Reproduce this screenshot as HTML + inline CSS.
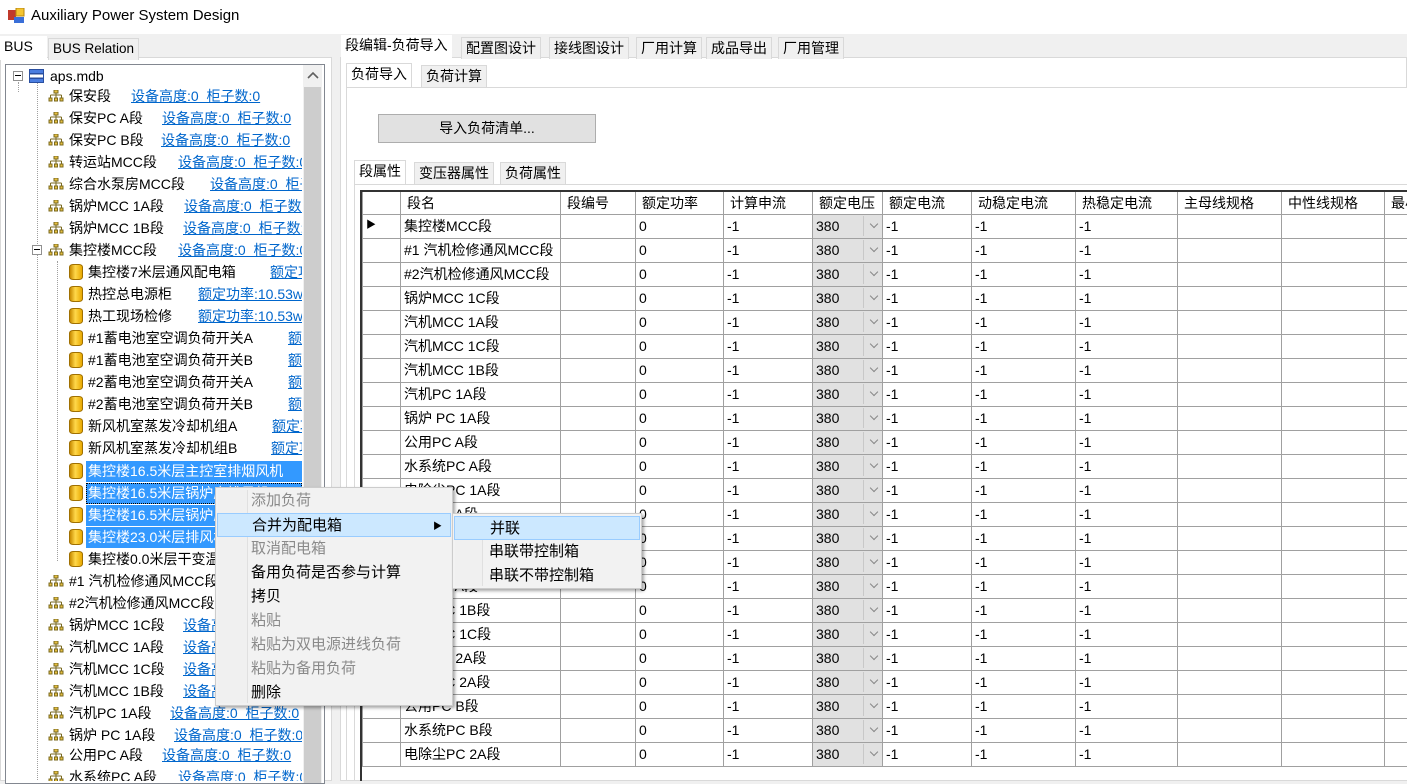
<!DOCTYPE html>
<html><head><meta charset="utf-8">
<style>
*{margin:0;padding:0;box-sizing:border-box}
body{width:1407px;height:781px;overflow:hidden;background:#f0f0f0;font-family:"Liberation Sans","Noto Sans CJK SC",sans-serif;font-size:14px;color:#000;position:relative}
.abs{position:absolute}
.title{left:0;top:0;width:1407px;height:34px;background:#fff}
.tab{position:absolute;height:22px;line-height:20px;padding:0 4px;border:1px solid #d9d9d9;border-bottom:none;background:#f0f0f0;white-space:nowrap}
.tab.sel{background:#fff;height:24px;z-index:2;border-color:#d9d9d9}
.r{position:absolute;height:20px;line-height:20px;white-space:nowrap;left:0;width:300px}
.r span,.r a,.r i,.r b{position:absolute;top:0}
.r a{color:#0066cc;text-decoration:underline}
.bi{width:16px;height:12px;top:4px!important}
.cy{width:14px;height:16px;top:2px!important;border-radius:4px/3px;background:linear-gradient(90deg,#c88a00,#ffd84a 45%,#e8a800);border:1px solid #a07000}
.hl{position:absolute;height:21px;background:#3399ff;}
.dot{position:absolute;border-left:1px dotted #a0a0a0}
.doth{position:absolute;border-top:1px dotted #a0a0a0;height:0}
table{border-collapse:collapse;font-size:14px}
td{border:1px solid #a0a0a0;height:24px;padding:0 3px;white-space:nowrap;overflow:hidden;line-height:22px}
th{border:1px solid #a0a0a0;height:23px;font-weight:normal;text-align:left;padding:0 6px;white-space:nowrap;overflow:hidden;border-top:2px solid #333}
.cb{background:#e1e1e1;position:relative;padding:0 3px}
.cb:after{content:"";position:absolute;right:0;top:1px;width:18px;height:20px;border-left:1px solid #c8c8c8;background:#e1e1e1}
.cb s{position:absolute;right:5px;top:6px;width:6px;height:6px;border-right:1px solid #888;border-bottom:1px solid #888;transform:rotate(45deg);z-index:2;text-decoration:none}
.menu{position:absolute;background:#f2f2f2;border:1px solid #ccc;box-shadow:2px 2px 3px rgba(0,0,0,.35)}
.mi{position:absolute;left:0;right:0;height:24px;line-height:24px;font-size:15px;white-space:nowrap}
.dis{color:#8a8a8a}
.mh{background:#cce8ff;border:1px solid #99ccff}
</style></head><body>
<div class="abs title"></div>
<svg class="abs" style="left:8px;top:8px" width="17" height="16"><rect x="0" y="2" width="8" height="10" fill="#c0392b"/><rect x="8" y="0" width="8" height="8" fill="#f4c430" stroke="#b8860b"/><rect x="6" y="9" width="10" height="6" fill="#3a6fd8"/></svg>
<div class="abs" style="left:31px;top:7px;font-size:15px">Auxiliary Power System Design</div>

<div class="abs" style="left:0;top:57px;width:332px;height:724px;background:#fff;border:1px solid #d9d9d9"></div>
<div class="tab sel" style="left:0;top:36px;width:47px;border:none">BUS</div>
<div class="tab" style="left:48px;top:38px;font-size:13.5px">BUS Relation</div>
<div class="abs" style="left:5px;top:64px;width:320px;height:720px;border:1px solid #828790;background:#fff;overflow:hidden">
<div class="abs" style="left:297px;top:0;width:19px;height:720px;background:#f0f0f0"></div>
<div class="abs" style="left:298px;top:22px;width:17px;height:700px;background:#cdcdcd"></div>
<svg class="abs" style="left:301px;top:6px" width="12" height="8"><path d="M1 7 L6 2 L11 7" stroke="#606060" stroke-width="1.6" fill="none"/></svg>
</div>

<div class="abs" style="left:6px;top:65px;width:296px;height:716px;overflow:hidden">
<div class="dot" style="left:12px;top:17px;height:10px"></div>
<div class="dot" style="left:31px;top:17px;height:700px"></div>
<div class="dot" style="left:51px;top:196px;height:300px"></div>
<div class="abs" style="left:7px;top:6px;width:10px;height:10px;border:1px solid #909090;background:#fff"><div class="abs" style="left:1px;top:3px;width:6px;height:1px;background:#000"></div></div>
<svg class="abs" style="left:23px;top:4px" width="15" height="14"><rect x="0.5" y="0.5" width="14" height="4" fill="#4a7de0" stroke="#2a4fa0"/><rect x="0.5" y="5" width="14" height="4" fill="#fff" stroke="#2a4fa0"/><rect x="0.5" y="9.5" width="14" height="4" fill="#4a7de0" stroke="#2a4fa0"/></svg>
<div class="r" style="top:1px"><span style="left:44px">aps.mdb</span></div>

<div class="abs" style="left:26px;top:180px;width:10px;height:10px;border:1px solid #909090;background:#fff;z-index:2"><div class="abs" style="left:1px;top:3px;width:6px;height:1px;background:#000"></div></div>

<div class="hl" style="left:80px;top:396px;width:216px"></div>
<div class="hl" style="left:80px;top:418px;width:216px;outline:1px dotted #000;outline-offset:-1px"></div>
<div class="hl" style="left:80px;top:440px;width:216px"></div>
<div class="hl" style="left:80px;top:462px;width:216px"></div>
</div>

<div class="abs" style="left:6px;top:65px;width:296px;height:716px;overflow:hidden">
<div class="r" style="top:21px"><svg class="bi" style="left:42px;position:absolute"><path d="M6 0h4v3h-4z M1 8h3v3h-3z M6.5 8h3v3h-3z M12 8h3v3h-3z M8 3v2 M2.5 5h11 M2.5 5v3 M8 5v3 M13.5 5v3" fill="#e8c040" stroke="#7a6a20" stroke-width="1"/></svg><span style="left:63px">保安段</span><a style="left:125px">设备高度:0&nbsp; 柜子数:0</a></div>
<div class="r" style="top:43px"><svg class="bi" style="left:42px;position:absolute"><path d="M6 0h4v3h-4z M1 8h3v3h-3z M6.5 8h3v3h-3z M12 8h3v3h-3z M8 3v2 M2.5 5h11 M2.5 5v3 M8 5v3 M13.5 5v3" fill="#e8c040" stroke="#7a6a20"/></svg><span style="left:63px">保安PC A段</span><a style="left:156px">设备高度:0&nbsp; 柜子数:0</a></div>
<div class="r" style="top:65px"><svg class="bi" style="left:42px;position:absolute"><path d="M6 0h4v3h-4z M1 8h3v3h-3z M6.5 8h3v3h-3z M12 8h3v3h-3z M8 3v2 M2.5 5h11 M2.5 5v3 M8 5v3 M13.5 5v3" fill="#e8c040" stroke="#7a6a20"/></svg><span style="left:63px">保安PC B段</span><a style="left:155px">设备高度:0&nbsp; 柜子数:0</a></div>
<div class="r" style="top:87px"><svg class="bi" style="left:42px;position:absolute"><path d="M6 0h4v3h-4z M1 8h3v3h-3z M6.5 8h3v3h-3z M12 8h3v3h-3z M8 3v2 M2.5 5h11 M2.5 5v3 M8 5v3 M13.5 5v3" fill="#e8c040" stroke="#7a6a20"/></svg><span style="left:63px">转运站MCC段</span><a style="left:172px">设备高度:0&nbsp; 柜子数:0</a></div>
<div class="r" style="top:109px"><svg class="bi" style="left:42px;position:absolute"><path d="M6 0h4v3h-4z M1 8h3v3h-3z M6.5 8h3v3h-3z M12 8h3v3h-3z M8 3v2 M2.5 5h11 M2.5 5v3 M8 5v3 M13.5 5v3" fill="#e8c040" stroke="#7a6a20"/></svg><span style="left:63px">综合水泵房MCC段</span><a style="left:204px">设备高度:0&nbsp; 柜子数:0</a></div>
<div class="r" style="top:131px"><svg class="bi" style="left:42px;position:absolute"><path d="M6 0h4v3h-4z M1 8h3v3h-3z M6.5 8h3v3h-3z M12 8h3v3h-3z M8 3v2 M2.5 5h11 M2.5 5v3 M8 5v3 M13.5 5v3" fill="#e8c040" stroke="#7a6a20"/></svg><span style="left:63px">锅炉MCC 1A段</span><a style="left:178px">设备高度:0&nbsp; 柜子数:0</a></div>
<div class="r" style="top:153px"><svg class="bi" style="left:42px;position:absolute"><path d="M6 0h4v3h-4z M1 8h3v3h-3z M6.5 8h3v3h-3z M12 8h3v3h-3z M8 3v2 M2.5 5h11 M2.5 5v3 M8 5v3 M13.5 5v3" fill="#e8c040" stroke="#7a6a20"/></svg><span style="left:63px">锅炉MCC 1B段</span><a style="left:177px">设备高度:0&nbsp; 柜子数:0</a></div>
<div class="r" style="top:175px"><svg class="bi" style="left:42px;position:absolute"><path d="M6 0h4v3h-4z M1 8h3v3h-3z M6.5 8h3v3h-3z M12 8h3v3h-3z M8 3v2 M2.5 5h11 M2.5 5v3 M8 5v3 M13.5 5v3" fill="#e8c040" stroke="#7a6a20"/></svg><span style="left:63px">集控楼MCC段</span><a style="left:172px">设备高度:0&nbsp; 柜子数:0</a></div>
<div class="r" style="top:197px"><i class="cy" style="left:63px"></i><span style="left:82px">集控楼7米层通风配电箱</span><a style="left:264px">额定功率:10.53w</a></div>
<div class="r" style="top:219px"><i class="cy" style="left:63px"></i><span style="left:82px">热控总电源柜</span><a style="left:192px">额定功率:10.53w</a></div>
<div class="r" style="top:241px"><i class="cy" style="left:63px"></i><span style="left:82px">热工现场检修</span><a style="left:192px">额定功率:10.53w</a></div>
<div class="r" style="top:263px"><i class="cy" style="left:63px"></i><span style="left:82px">#1蓄电池室空调负荷开关A</span><a style="left:282px">额定功率</a></div>
<div class="r" style="top:285px"><i class="cy" style="left:63px"></i><span style="left:82px">#1蓄电池室空调负荷开关B</span><a style="left:282px">额定功率</a></div>
<div class="r" style="top:307px"><i class="cy" style="left:63px"></i><span style="left:82px">#2蓄电池室空调负荷开关A</span><a style="left:282px">额定功率</a></div>
<div class="r" style="top:329px"><i class="cy" style="left:63px"></i><span style="left:82px">#2蓄电池室空调负荷开关B</span><a style="left:282px">额定功率</a></div>
<div class="r" style="top:351px"><i class="cy" style="left:63px"></i><span style="left:82px">新风机室蒸发冷却机组A</span><a style="left:266px">额定功率</a></div>
<div class="r" style="top:373px"><i class="cy" style="left:63px"></i><span style="left:82px">新风机室蒸发冷却机组B</span><a style="left:265px">额定功率</a></div>
<div class="r" style="top:396px;color:#fff"><i class="cy" style="left:63px"></i><span style="left:82px">集控楼16.5米层主控室排烟风机</span></div>
<div class="r" style="top:418px;color:#fff"><i class="cy" style="left:63px"></i><span style="left:82px">集控楼16.5米层锅炉房排风机</span></div>
<div class="r" style="top:440px;color:#fff"><i class="cy" style="left:63px"></i><span style="left:82px">集控楼16.5米层锅炉房排风机</span></div>
<div class="r" style="top:462px;color:#fff"><i class="cy" style="left:63px"></i><span style="left:82px">集控楼23.0米层排风机</span></div>
<div class="r" style="top:484px"><i class="cy" style="left:63px"></i><span style="left:82px">集控楼0.0米层干变温控</span></div>
<div class="r" style="top:506px"><svg class="bi" style="left:42px;position:absolute"><path d="M6 0h4v3h-4z M1 8h3v3h-3z M6.5 8h3v3h-3z M12 8h3v3h-3z M8 3v2 M2.5 5h11 M2.5 5v3 M8 5v3 M13.5 5v3" fill="#e8c040" stroke="#7a6a20"/></svg><span style="left:63px">#1 汽机检修通风MCC段</span></div>
<div class="r" style="top:528px"><svg class="bi" style="left:42px;position:absolute"><path d="M6 0h4v3h-4z M1 8h3v3h-3z M6.5 8h3v3h-3z M12 8h3v3h-3z M8 3v2 M2.5 5h11 M2.5 5v3 M8 5v3 M13.5 5v3" fill="#e8c040" stroke="#7a6a20"/></svg><span style="left:63px">#2汽机检修通风MCC段</span></div>
<div class="r" style="top:550px"><svg class="bi" style="left:42px;position:absolute"><path d="M6 0h4v3h-4z M1 8h3v3h-3z M6.5 8h3v3h-3z M12 8h3v3h-3z M8 3v2 M2.5 5h11 M2.5 5v3 M8 5v3 M13.5 5v3" fill="#e8c040" stroke="#7a6a20"/></svg><span style="left:63px">锅炉MCC 1C段</span><a style="left:177px">设备高度:0&nbsp; 柜子数:0</a></div>
<div class="r" style="top:572px"><svg class="bi" style="left:42px;position:absolute"><path d="M6 0h4v3h-4z M1 8h3v3h-3z M6.5 8h3v3h-3z M12 8h3v3h-3z M8 3v2 M2.5 5h11 M2.5 5v3 M8 5v3 M13.5 5v3" fill="#e8c040" stroke="#7a6a20"/></svg><span style="left:63px">汽机MCC 1A段</span><a style="left:177px">设备高度:0&nbsp; 柜子数:0</a></div>
<div class="r" style="top:594px"><svg class="bi" style="left:42px;position:absolute"><path d="M6 0h4v3h-4z M1 8h3v3h-3z M6.5 8h3v3h-3z M12 8h3v3h-3z M8 3v2 M2.5 5h11 M2.5 5v3 M8 5v3 M13.5 5v3" fill="#e8c040" stroke="#7a6a20"/></svg><span style="left:63px">汽机MCC 1C段</span><a style="left:177px">设备高度:0&nbsp; 柜子数:0</a></div>
<div class="r" style="top:616px"><svg class="bi" style="left:42px;position:absolute"><path d="M6 0h4v3h-4z M1 8h3v3h-3z M6.5 8h3v3h-3z M12 8h3v3h-3z M8 3v2 M2.5 5h11 M2.5 5v3 M8 5v3 M13.5 5v3" fill="#e8c040" stroke="#7a6a20"/></svg><span style="left:63px">汽机MCC 1B段</span><a style="left:177px">设备高度:0&nbsp; 柜子数:0</a></div>
<div class="r" style="top:638px"><svg class="bi" style="left:42px;position:absolute"><path d="M6 0h4v3h-4z M1 8h3v3h-3z M6.5 8h3v3h-3z M12 8h3v3h-3z M8 3v2 M2.5 5h11 M2.5 5v3 M8 5v3 M13.5 5v3" fill="#e8c040" stroke="#7a6a20"/></svg><span style="left:63px">汽机PC 1A段</span><a style="left:164px">设备高度:0&nbsp; 柜子数:0</a></div>
<div class="r" style="top:660px"><svg class="bi" style="left:42px;position:absolute"><path d="M6 0h4v3h-4z M1 8h3v3h-3z M6.5 8h3v3h-3z M12 8h3v3h-3z M8 3v2 M2.5 5h11 M2.5 5v3 M8 5v3 M13.5 5v3" fill="#e8c040" stroke="#7a6a20"/></svg><span style="left:63px">锅炉 PC 1A段</span><a style="left:168px">设备高度:0&nbsp; 柜子数:0</a></div>
<div class="r" style="top:680px"><svg class="bi" style="left:42px;position:absolute"><path d="M6 0h4v3h-4z M1 8h3v3h-3z M6.5 8h3v3h-3z M12 8h3v3h-3z M8 3v2 M2.5 5h11 M2.5 5v3 M8 5v3 M13.5 5v3" fill="#e8c040" stroke="#7a6a20"/></svg><span style="left:63px">公用PC A段</span><a style="left:156px">设备高度:0&nbsp; 柜子数:0</a></div>
<div class="r" style="top:702px"><svg class="bi" style="left:42px;position:absolute"><path d="M6 0h4v3h-4z M1 8h3v3h-3z M6.5 8h3v3h-3z M12 8h3v3h-3z M8 3v2 M2.5 5h11 M2.5 5v3 M8 5v3 M13.5 5v3" fill="#e8c040" stroke="#7a6a20"/></svg><span style="left:63px">水系统PC A段</span><a style="left:172px">设备高度:0&nbsp; 柜子数:0</a></div>
</div>

<div class="abs" style="left:340px;top:57px;width:1067px;height:724px;background:#fff;border:1px solid #d9d9d9"></div>
<div class="tab sel" style="left:341px;top:35px;border:none">段编辑-负荷导入</div>
<div class="tab" style="left:461px;top:37px">配置图设计</div>
<div class="tab" style="left:549px;top:37px">接线图设计</div>
<div class="tab" style="left:636px;top:37px">厂用计算</div>
<div class="tab" style="left:706px;top:37px">成品导出</div>
<div class="tab" style="left:778px;top:37px">厂用管理</div>
<div class="abs" style="left:346px;top:87px;width:1061px;height:694px;border:1px solid #d9d9d9;border-right:none;background:#fff"></div>
<div class="tab sel" style="left:346px;top:63px;border-bottom:none">负荷导入</div>
<div class="tab" style="left:421px;top:65px">负荷计算</div>
<div class="abs" style="left:378px;top:114px;width:218px;height:29px;background:#e1e1e1;border:1px solid #adadad;text-align:center;line-height:26px">导入负荷清单...</div>
<div class="abs" style="left:354px;top:184px;width:1053px;height:597px;border:1px solid #d9d9d9;border-right:none;background:#fff"></div>
<div class="tab sel" style="left:354px;top:160px">段属性</div>
<div class="tab" style="left:414px;top:162px">变压器属性</div>
<div class="tab" style="left:500px;top:162px">负荷属性</div>

<div class="abs" style="left:360px;top:190px;width:1047px;height:591px;overflow:hidden;border-left:2px solid #333">
<table style="width:1100px;table-layout:fixed">
<colgroup><col style="width:38px"><col style="width:160px"><col style="width:75px"><col style="width:88px"><col style="width:89px"><col style="width:70px"><col style="width:89px"><col style="width:104px"><col style="width:102px"><col style="width:104px"><col style="width:103px"><col style="width:78px"></colgroup>
<tr><th></th><th>段名</th><th>段编号</th><th>额定功率</th><th>计算申流</th><th>额定电压</th><th>额定电流</th><th>动稳定电流</th><th>热稳定电流</th><th>主母线规格</th><th>中性线规格</th><th>最小</th></tr>
<tr><td style="font-size:10px">&#9654;</td><td>集控楼MCC段</td><td></td><td>0</td><td>-1</td><td class="cb">380<s></s></td><td>-1</td><td>-1</td><td>-1</td><td></td><td></td><td></td></tr>
<tr><td></td><td>#1 汽机检修通风MCC段</td><td></td><td>0</td><td>-1</td><td class="cb">380<s></s></td><td>-1</td><td>-1</td><td>-1</td><td></td><td></td><td></td></tr>
<tr><td></td><td>#2汽机检修通风MCC段</td><td></td><td>0</td><td>-1</td><td class="cb">380<s></s></td><td>-1</td><td>-1</td><td>-1</td><td></td><td></td><td></td></tr>
<tr><td></td><td>锅炉MCC 1C段</td><td></td><td>0</td><td>-1</td><td class="cb">380<s></s></td><td>-1</td><td>-1</td><td>-1</td><td></td><td></td><td></td></tr>
<tr><td></td><td>汽机MCC 1A段</td><td></td><td>0</td><td>-1</td><td class="cb">380<s></s></td><td>-1</td><td>-1</td><td>-1</td><td></td><td></td><td></td></tr>
<tr><td></td><td>汽机MCC 1C段</td><td></td><td>0</td><td>-1</td><td class="cb">380<s></s></td><td>-1</td><td>-1</td><td>-1</td><td></td><td></td><td></td></tr>
<tr><td></td><td>汽机MCC 1B段</td><td></td><td>0</td><td>-1</td><td class="cb">380<s></s></td><td>-1</td><td>-1</td><td>-1</td><td></td><td></td><td></td></tr>
<tr><td></td><td>汽机PC 1A段</td><td></td><td>0</td><td>-1</td><td class="cb">380<s></s></td><td>-1</td><td>-1</td><td>-1</td><td></td><td></td><td></td></tr>
<tr><td></td><td>锅炉 PC 1A段</td><td></td><td>0</td><td>-1</td><td class="cb">380<s></s></td><td>-1</td><td>-1</td><td>-1</td><td></td><td></td><td></td></tr>
<tr><td></td><td>公用PC A段</td><td></td><td>0</td><td>-1</td><td class="cb">380<s></s></td><td>-1</td><td>-1</td><td>-1</td><td></td><td></td><td></td></tr>
<tr><td></td><td>水系统PC A段</td><td></td><td>0</td><td>-1</td><td class="cb">380<s></s></td><td>-1</td><td>-1</td><td>-1</td><td></td><td></td><td></td></tr>
<tr><td></td><td>电除尘PC 1A段</td><td></td><td>0</td><td>-1</td><td class="cb">380<s></s></td><td>-1</td><td>-1</td><td>-1</td><td></td><td></td><td></td></tr>
<tr><td></td><td>照明PC A段</td><td></td><td>0</td><td>-1</td><td class="cb">380<s></s></td><td>-1</td><td>-1</td><td>-1</td><td></td><td></td><td></td></tr>
<tr><td></td><td>检修PC A段</td><td></td><td>0</td><td>-1</td><td class="cb">380<s></s></td><td>-1</td><td>-1</td><td>-1</td><td></td><td></td><td></td></tr>
<tr><td></td><td>汽机PC 1B段</td><td></td><td>0</td><td>-1</td><td class="cb">380<s></s></td><td>-1</td><td>-1</td><td>-1</td><td></td><td></td><td></td></tr>
<tr><td></td><td>照明PC A段</td><td></td><td>0</td><td>-1</td><td class="cb">380<s></s></td><td>-1</td><td>-1</td><td>-1</td><td></td><td></td><td></td></tr>
<tr><td></td><td>锅炉 PC 1B段</td><td></td><td>0</td><td>-1</td><td class="cb">380<s></s></td><td>-1</td><td>-1</td><td>-1</td><td></td><td></td><td></td></tr>
<tr><td></td><td>锅炉 PC 1C段</td><td></td><td>0</td><td>-1</td><td class="cb">380<s></s></td><td>-1</td><td>-1</td><td>-1</td><td></td><td></td><td></td></tr>
<tr><td></td><td>汽机PC 2A段</td><td></td><td>0</td><td>-1</td><td class="cb">380<s></s></td><td>-1</td><td>-1</td><td>-1</td><td></td><td></td><td></td></tr>
<tr><td></td><td>锅炉 PC 2A段</td><td></td><td>0</td><td>-1</td><td class="cb">380<s></s></td><td>-1</td><td>-1</td><td>-1</td><td></td><td></td><td></td></tr>
<tr><td></td><td>公用PC B段</td><td></td><td>0</td><td>-1</td><td class="cb">380<s></s></td><td>-1</td><td>-1</td><td>-1</td><td></td><td></td><td></td></tr>
<tr><td></td><td>水系统PC B段</td><td></td><td>0</td><td>-1</td><td class="cb">380<s></s></td><td>-1</td><td>-1</td><td>-1</td><td></td><td></td><td></td></tr>
<tr><td></td><td>电除尘PC 2A段</td><td></td><td>0</td><td>-1</td><td class="cb">380<s></s></td><td>-1</td><td>-1</td><td>-1</td><td></td><td></td><td></td></tr>
</table>
</div>

<div class="menu" style="left:215px;top:487px;width:238px;height:219px">
<div class="abs" style="left:2px;top:2px;width:30px;height:213px;background:#f0f0f0;border-right:1px solid #e0e0e0"></div>
<div class="mi dis" style="top:1px;padding-left:35px">添加负荷</div>
<div class="mi mh" style="top:25px;left:1px;right:1px;padding-left:34px">合并为配电箱<span class="abs" style="right:8px;top:0;font-size:9px">&#9654;</span></div>
<div class="mi dis" style="top:49px;padding-left:35px">取消配电箱</div>
<div class="mi" style="top:73px;padding-left:35px">备用负荷是否参与计算</div>
<div class="mi" style="top:97px;padding-left:35px">拷贝</div>
<div class="mi dis" style="top:121px;padding-left:35px">粘贴</div>
<div class="mi dis" style="top:145px;padding-left:35px">粘贴为双电源进线负荷</div>
<div class="mi dis" style="top:169px;padding-left:35px">粘贴为备用负荷</div>
<div class="mi" style="top:193px;padding-left:35px">删除</div>
</div>
<div class="menu" style="left:452px;top:513px;width:190px;height:76px">
<div class="abs" style="left:2px;top:2px;width:28px;height:70px;background:#f0f0f0;border-right:1px solid #e0e0e0"></div>
<div class="mi mh" style="top:2px;left:1px;right:1px;padding-left:35px">并联</div>
<div class="mi" style="top:26px;padding-left:36px">串联带控制箱</div>
<div class="mi" style="top:50px;padding-left:36px">串联不带控制箱</div>
</div>
</body></html>
